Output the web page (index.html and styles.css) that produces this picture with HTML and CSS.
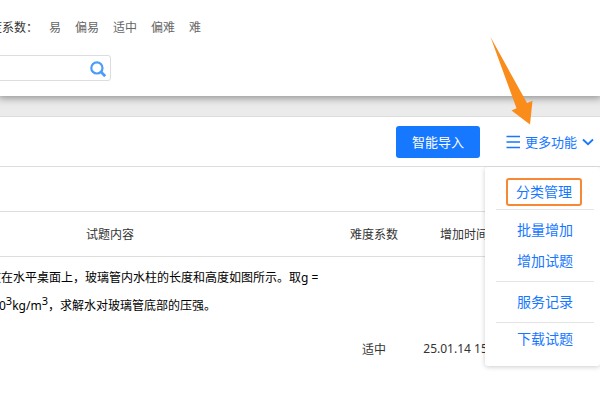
FILE: index.html
```html
<!DOCTYPE html>
<html lang="zh-CN">
<head>
    <meta charset="UTF-8">
    <meta name="viewport" content="width=device-width, initial-scale=1.0">
    <title>试题管理</title>
    <link rel="stylesheet" href="styles.css">
</head>
<body>

    <header class="filter-panel">
        <div class="filter-row">
            <span class="filter-label">难度系数：</span>
            <nav class="filter-options">
                <a href="#">易</a>
                <a href="#">偏易</a>
                <a href="#">适中</a>
                <a href="#">偏难</a>
                <a href="#">难</a>
            </nav>
        </div>
        <form class="search-box">
            <input type="text" class="search-input" aria-label="搜索试题">
            <button type="button" class="search-button" aria-label="搜索">
                <svg width="16" height="16" viewBox="0 0 16 16" fill="none" stroke="#4a9cf8">
                    <circle cx="6.9" cy="6.9" r="5.6" stroke-width="2.2"/>
                    <path d="M10.8 10.8L15.2 15.2" stroke-width="2.8"/>
                </svg>
            </button>
        </form>
    </header>

    <main class="content">
        <div class="toolbar">
            <button type="button" class="button-primary">智能导入</button>
            <div class="dropdown">
                <button type="button" class="dropdown-toggle">
                    <svg width="14" height="14" viewBox="0 0 14 14" stroke="#1677ff" stroke-width="1.4">
                        <path d="M0.5 1.5H14M0.5 7H14M0.5 12.5H14"/>
                    </svg>
                    更多功能
                    <svg class="chevron" width="12" height="8" viewBox="0 0 12 8" fill="none" stroke="#1677ff" stroke-width="1.8">
                        <path d="M1 1.5L6 6.2L11 1.5"/>
                    </svg>
                </button>
                <div class="menu">
                    <div class="menu-group menu-group-first">
                        <a href="#" class="menu-item menu-item-marked">分类管理</a>
                    </div>
                    <div class="menu-group">
                        <a href="#" class="menu-item">批量增加</a>
                        <a href="#" class="menu-item">增加试题</a>
                    </div>
                    <div class="menu-group">
                        <a href="#" class="menu-item">服务记录</a>
                    </div>
                    <div class="menu-group menu-group-last">
                        <a href="#" class="menu-item">下载试题</a>
                    </div>
                </div>
                <svg class="pointer" width="44" height="88" viewBox="0 0 44 88" fill="#fa8c1c">
                    <path d="M0.5 0L37 66L42.5 63.7L40 87.5L21.5 73.5L26.5 71.3Z"/>
                </svg>
            </div>
        </div>

        <table class="question-table">
            <thead>
                <tr>
                    <th class="col-content">试题内容</th>
                    <th class="col-level">难度系数</th>
                    <th class="col-time">增加时间</th>
                    <th></th>
                </tr>
            </thead>
            <tbody>
                <tr>
                    <td class="question">放在水平桌面上，玻璃管内水柱的长度和高度如图所示。取g =<br>&nbsp;10<sup>3</sup>kg/m<sup>3</sup>，求解水对玻璃管底部的压强。</td>
                    <td>适中</td>
                    <td class="time">25.01.14 15:32</td>
                    <td></td>
                </tr>
            </tbody>
        </table>
    </main>

</body>
</html>
```

FILE: styles.css
```css
* {
    box-sizing: border-box;
}
body {
    display: flex;
    flex-direction: column;
    min-height: 100vh;
    margin: 0;
    overflow: hidden;
    background-color: #ebebeb;
    font-family: "Noto Sans", "Noto Sans CJK SC", sans-serif;
    font-size: 12px;
    color: #333;
}
a {
    color: inherit;
    text-decoration: none;
}
button {
    font-family: inherit;
    cursor: pointer;
}

/* Filters */
.filter-panel {
    position: relative;
    padding: 17px 0 15px;
    background-color: #fff;
    box-shadow: 0 0 8px 2px rgba(0,0,0,0.4);
}
.filter-row {
    display: flex;
    align-items: center;
    gap: 11px;
    height: 20px;
    margin-left: -22px;
    white-space: nowrap;
}
.filter-options {
    display: flex;
    gap: 14px;
    color: #666;
}
.search-box {
    display: flex;
    align-items: center;
    width: 116px;
    height: 26px;
    margin: 18px 0 0 -5px;
    border: 1px solid #ddd;
    border-radius: 3px;
}
.search-input {
    flex: 1;
    min-width: 0;
    border: none;
    outline: none;
    background: none;
}
.search-button {
    display: flex;
    padding: 2px 4px 0;
    border: none;
    background: none;
}

/* Toolbar */
.content {
    flex: 1;
    margin-top: 20px;
    border-top: 1px solid #ddd;
    background-color: #fff;
}
.toolbar {
    display: flex;
    justify-content: flex-end;
    align-items: center;
    gap: 26px;
    height: 50px;
    padding-right: 6px;
    border-bottom: 1px solid #ddd;
}
.button-primary {
    height: 32px;
    padding: 0 16px;
    border: none;
    border-radius: 3px;
    background-color: #1677ff;
    color: #fff;
    font-size: 13px;
}
.dropdown {
    position: relative;
}
.dropdown-toggle {
    display: flex;
    align-items: center;
    gap: 5px;
    height: 32px;
    padding: 0;
    border: none;
    background: none;
    color: #1677ff;
    font-size: 13px;
}
.menu {
    position: absolute;
    top: 41px;
    right: -6px;
    width: 115px;
    padding: 0 6px 0 11px;
    border-radius: 3px;
    background-color: #fff;
    box-shadow: 0 1px 5px rgba(0,0,0,0.2);
    clip-path: inset(0 0 -8px -8px);
}
.menu-group {
    padding: 4px 0 5px;
    border-bottom: 1px solid #e4e4e4;
}
.menu-group-first {
    padding: 11px 0 3px;
}
.menu-group-last {
    padding: 0 0 12px;
    border-bottom: none;
}
.menu-item {
    display: block;
    width: 78px;
    margin-left: 10px;
    color: #1677ff;
    font-size: 14px;
    line-height: 31px;
    text-align: center;
}
.menu-item-marked {
    width: 76px;
    border: 2px solid #f98836;
    border-radius: 3px;
    line-height: 24px;
}
.pointer {
    position: absolute;
    right: 60px;
    bottom: 33px;
}

/* Question list, scrolled to the right */
.question-table {
    width: calc(100% + 110px);
    margin: 44px 0 0 -110px;
    border-collapse: collapse;
    table-layout: fixed;
}
.question-table th {
    height: 45px;
    padding: 0;
    border-top: 1px solid #ddd;
    border-bottom: 1px solid #ddd;
    font-weight: normal;
}
.question-table td {
    padding: 76px 0;
    text-align: center;
}
.col-content {
    width: 440px;
}
.col-level {
    width: 88px;
}
.col-time {
    width: 92px;
}
.question-table .question {
    padding: 7px 0 0 99px;
    color: #000;
    line-height: 28px;
    text-align: left;
    vertical-align: top;
    white-space: nowrap;
}
.question sup {
    font-size: 11px;
    line-height: 0;
}
.question-table .time {
    padding-bottom: 40px;
    padding-top: 83px;
    vertical-align: top;
    white-space: nowrap;
}
.question-table td:nth-child(2) {
    padding-bottom: 40px;
    padding-top: 83px;
    vertical-align: top;
}
```
